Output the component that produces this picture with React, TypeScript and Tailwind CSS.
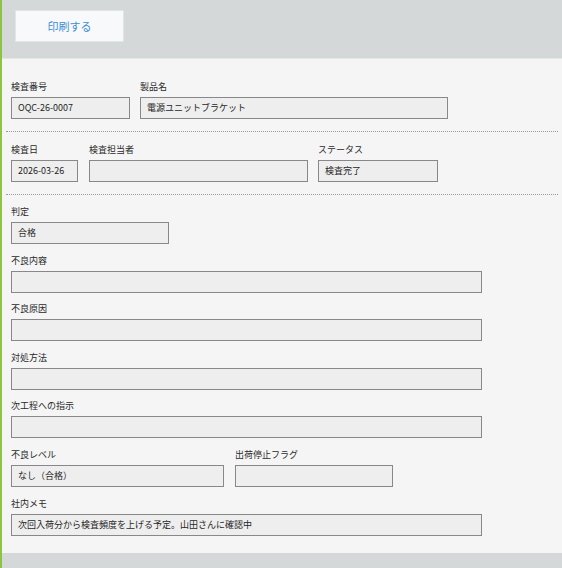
const font = { fontFamily: '"Noto Sans CJK JP", "Noto Sans", sans-serif' };

function Field({
  label,
  value,
  width,
}: {
  label: string;
  value?: string;
  width: string;
}) {
  return (
    <div className="flex flex-col">
      <div className="text-[9px] leading-[12px] mb-[4px] text-[#2a2a2a] whitespace-nowrap">{label}</div>
      <div
        className={`${width} h-[22px] border border-[#888] bg-[#eeeeee] pl-[6px] flex items-center text-[9px] text-[#1f1f1f] whitespace-nowrap overflow-hidden`}
      >
        {value}
      </div>
    </div>
  );
}

function Divider() {
  return <div className="mx-[4px] border-t border-dotted border-[#999]" />;
}

export default function App() {
  return (
    <div className="w-[562px] h-[568px] flex flex-col border-l-2 border-[#8cc63f] overflow-hidden" style={font}>
      <div className="h-[59px] shrink-0 bg-[#d4d8d8] border-b border-[#e4e7e7] pl-[13px] pt-[10px]">
        <button className="w-[109px] h-[32px] bg-[#f7f9fb] border border-[#e1e5e7] text-[11px] text-[#3d8fd6]">
          印刷する
        </button>
      </div>

      <div className="bg-[#f5f5f5] pt-[22px] pb-[17px]">
        <div className="flex gap-[10px] pl-[9px]">
          <Field label="検査番号" value="OQC-26-0007" width="w-[119px]" />
          <Field label="製品名" value="電源ユニットブラケット" width="w-[308px]" />
        </div>

        <div className="mt-[12px]">
          <Divider />
        </div>

        <div className="flex pl-[9px] mt-[12px]">
          <Field label="検査日" value="2026-03-26" width="w-[67px]" />
          <div className="ml-[11px]">
            <Field label="検査担当者" width="w-[219px]" />
          </div>
          <div className="ml-[10px]">
            <Field label="ステータス" value="検査完了" width="w-[120px]" />
          </div>
        </div>

        <div className="mt-[12px]">
          <Divider />
        </div>

        <div className="flex flex-col gap-[10.6px] pl-[9px] mt-[11px]">
          <Field label="判定" value="合格" width="w-[158px]" />
          <Field label="不良内容" width="w-[471px]" />
          <Field label="不良原因" width="w-[471px]" />
          <Field label="対処方法" width="w-[471px]" />
          <Field label="次工程への指示" width="w-[471px]" />
          <div className="flex gap-[11px]">
            <Field label="不良レベル" value="なし（合格）" width="w-[213px]" />
            <Field label="出荷停止フラグ" width="w-[158px]" />
          </div>
          <Field label="社内メモ" value="次回入荷分から検査頻度を上げる予定。山田さんに確認中" width="w-[471px]" />
        </div>
      </div>

      <div className="flex-1 bg-[#d4d8d8]" />
    </div>
  );
}
